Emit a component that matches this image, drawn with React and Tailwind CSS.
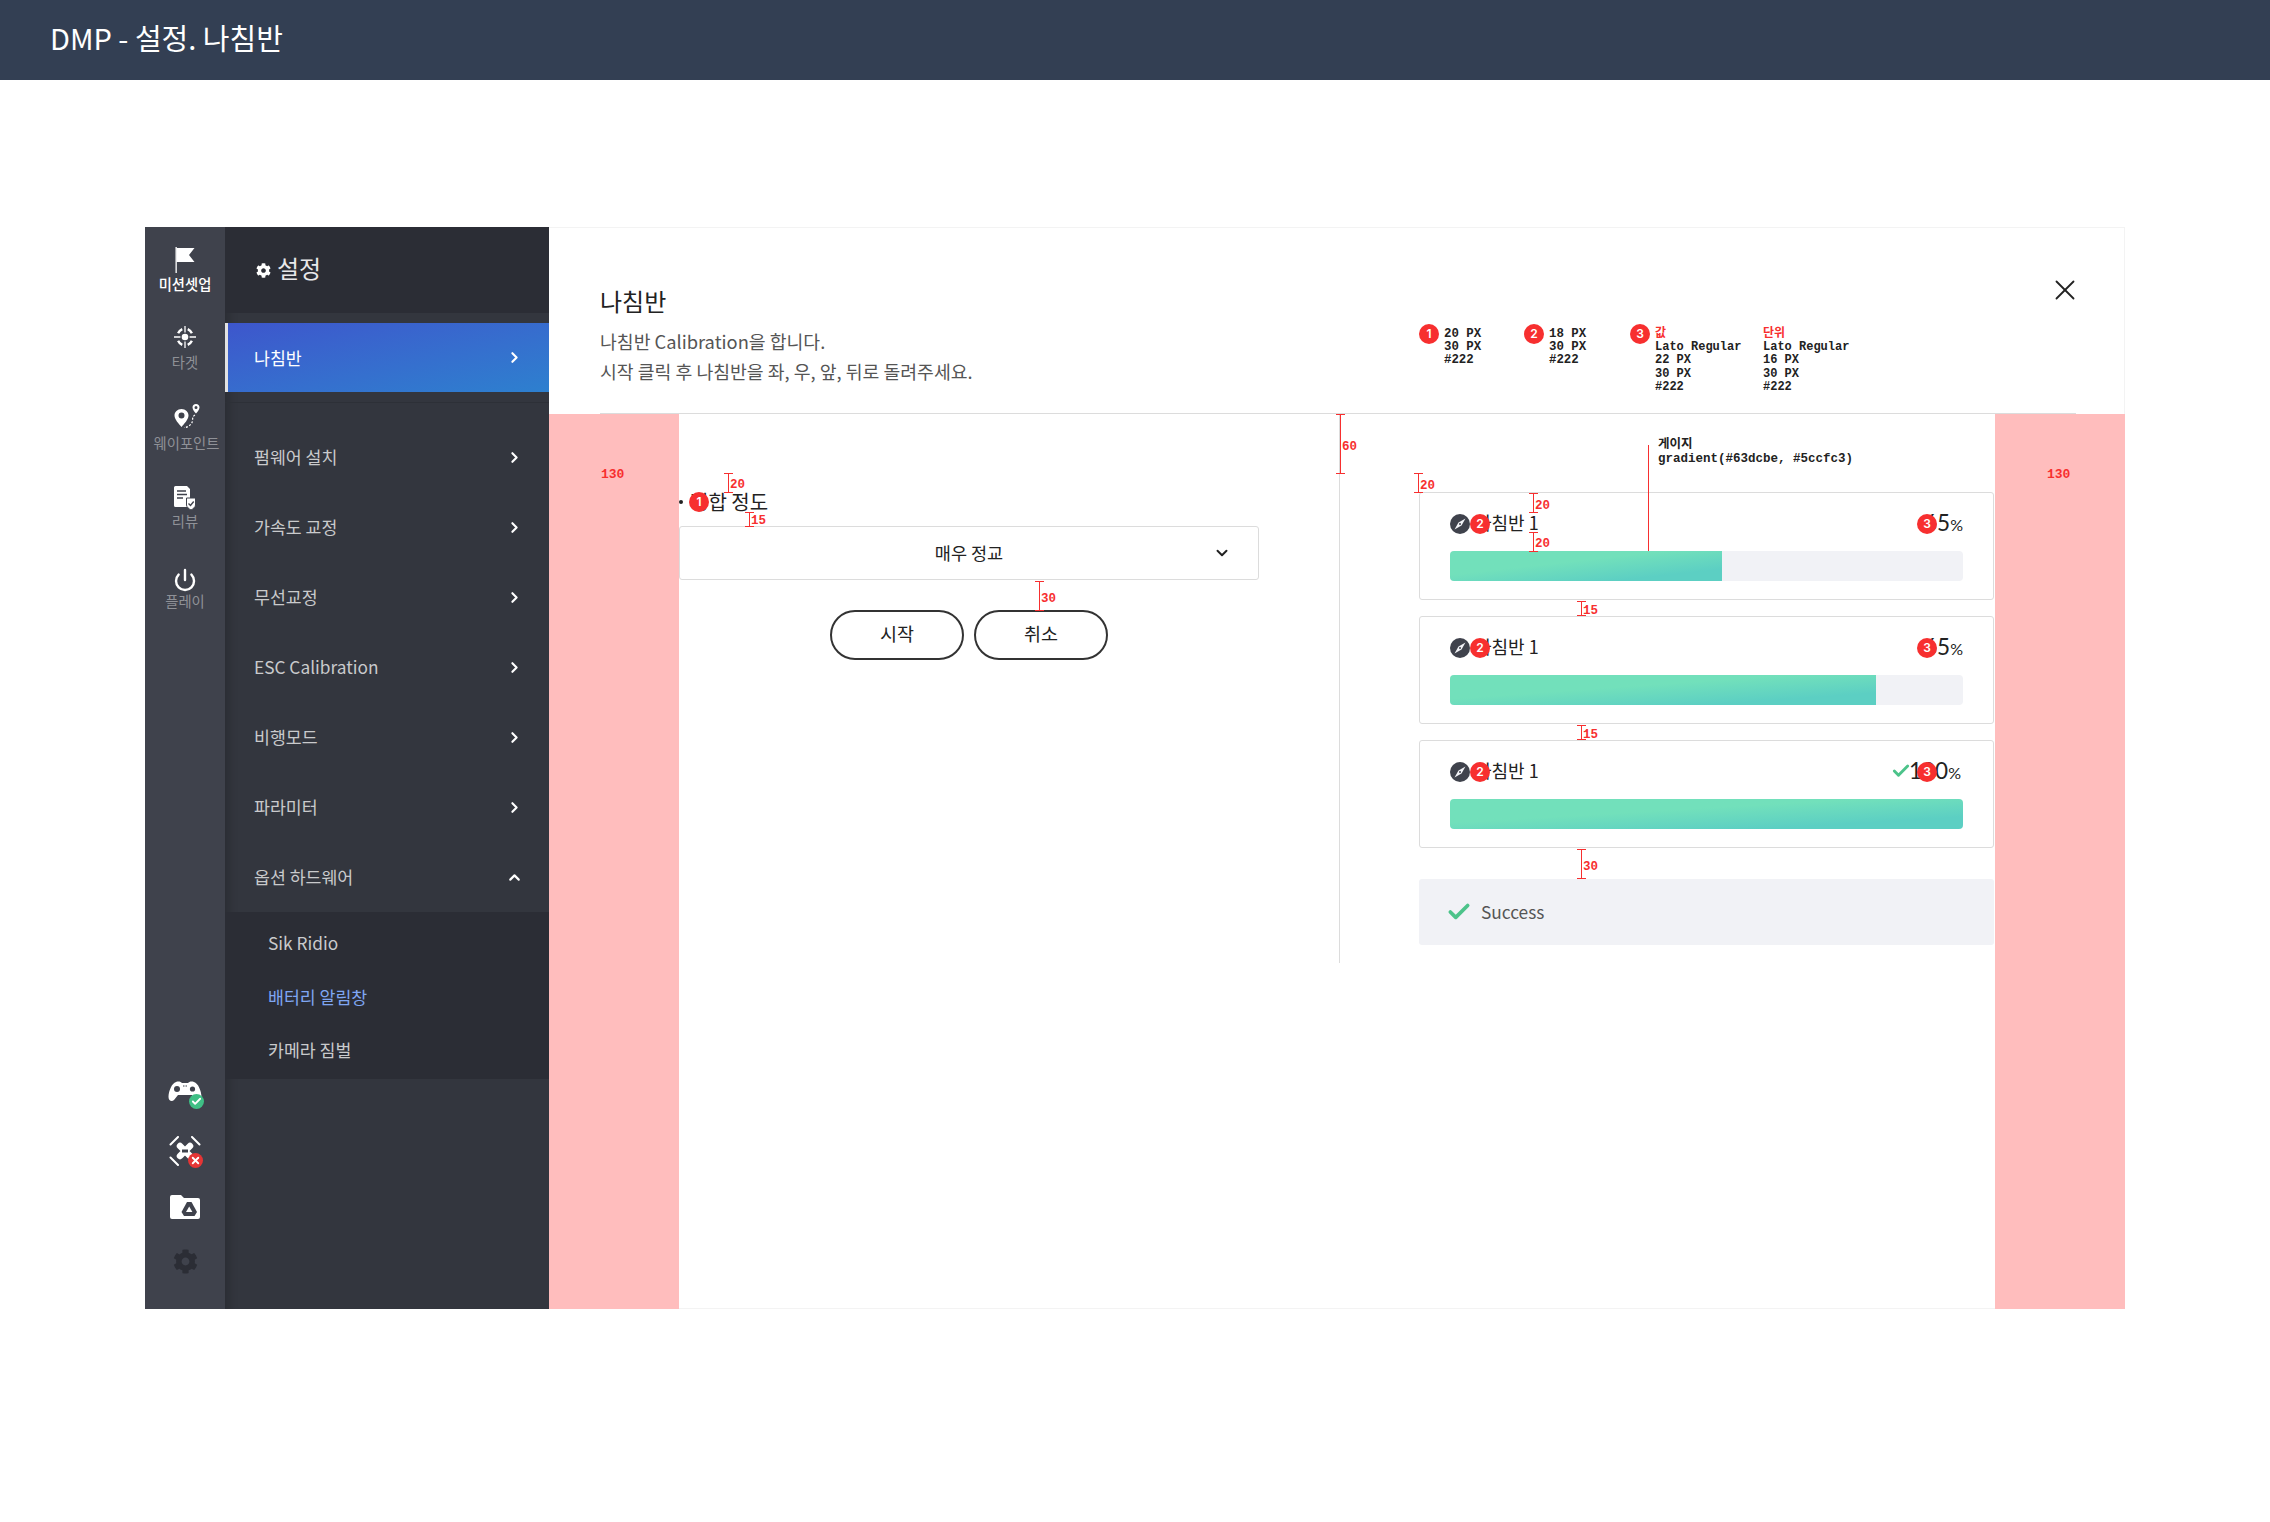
import React from 'react';
import { ChevronRight, ChevronUp, ChevronDown, Power, X, Check } from 'lucide-react';
import { FaCog } from 'react-icons/fa';

const menuItems = ['펌웨어 설치', '가속도 교정', '무선교정', 'ESC Calibration', '비행모드', '파라미터'];

// numbered marker from the spec sheet
const Badge = ({ n, className = '' }) => (
  <span className={`absolute flex h-5 w-5 items-center justify-center rounded-full bg-[#f72f2f] font-['Inter',sans-serif] text-[12px] font-semibold text-white ${className}`}>
    {n}
  </span>
);

// red measuring mark, placed by className
const Dim = ({ label, className = '', labelClass = '' }) => (
  <div className={`absolute w-[9px] border-x-0 border-y border-[#f72f2f] ${className}`}>
    <div className="absolute left-[4px] top-0 h-full w-px bg-[#f72f2f]" />
    <span className={`absolute left-[6px] font-['Liberation_Mono',monospace] text-[12.5px] font-bold leading-none text-[#f72f2f] ${labelClass}`}>{label}</span>
  </div>
);

const FlagIcon = () => (
  <svg width="20" height="26" viewBox="0 0 20 26" fill="white">
    <rect x="0.5" y="0" width="1.3" height="26" />
    <path d="M1.5 1 H19.5 L14 8 L19.5 15 H1.5 Z" />
  </svg>
);

const TargetIcon = () => (
  <svg width="22" height="22" viewBox="0 0 24 24" fill="none" stroke="white">
    <circle cx="12" cy="12" r="3.6" fill="white" stroke="none" />
    <path d="M12 0 V7 M12 17 V24 M0 12 H7 M17 12 H24" strokeWidth="1.4" />
    <path d="M4.5 8 A9 9 0 0 1 9 3.5 M15 3.5 A9 9 0 0 1 19.5 8 M19.5 16 A9 9 0 0 1 15 20.5 M9 20.5 A9 9 0 0 1 4.5 16" strokeWidth="2.6" />
  </svg>
);

const WaypointIcon = () => (
  <svg width="26" height="24" viewBox="0 0 26 24" fill="none">
    <path fillRule="evenodd" d="M7.5 5 C3.4 5 0.5 8 0.5 11.5 C0.5 15.5 5 20 7.5 23 C10 20 14.5 15.5 14.5 11.5 C14.5 8 11.6 5 7.5 5 Z M7.5 8.5 a3 3 0 1 1 0 6 a3 3 0 1 1 0 -6 Z" fill="white" />
    <path fillRule="evenodd" d="M22 0 C19.8 0 18.5 1.6 18.5 3.4 C18.5 5.5 20.6 7.6 22 9.5 C23.4 7.6 25.5 5.5 25.5 3.4 C25.5 1.6 24.2 0 22 0 Z M22 2 a1.5 1.5 0 1 1 0 3 a1.5 1.5 0 1 1 0 -3 Z" fill="white" />
    <path d="M21 11 C17 13 20 17 17 20 C15.5 22 13 23.5 10 23.5" stroke="white" strokeWidth="1.2" strokeDasharray="2 1.6" />
  </svg>
);

const ReviewIcon = () => (
  <svg width="22" height="24" viewBox="0 0 22 24">
    <path d="M1.5 0 H13 L16 3 V21 H1.5 A1.5 1.5 0 0 1 0 19.5 V1.5 A1.5 1.5 0 0 1 1.5 0 Z" fill="white" />
    <path d="M3 5 H12 M3 8.5 H13 M3 12 H9" stroke="#3f424c" strokeWidth="1.5" />
    <path d="M13 12 L21.5 12 V19 C21.5 21 19 23 17 24 C15 23 12.5 21 12.5 19 V12 Z" fill="white" stroke="#3f424c" strokeWidth="1" />
    <path d="M14.5 17.5 L16.5 19.5 L19.7 15.5" fill="none" stroke="#3f424c" strokeWidth="1.4" />
  </svg>
);

const GamepadIcon = () => (
  <svg width="34" height="22" viewBox="0 0 34 22">
    <path d="M8 1 C11 0 13 1 14 2 H20 C21 1 23 0 26 1 C30 2 33.5 10 33.5 16 C33.5 20 30 21 28 19 L24 14 H10 L6 19 C4 21 .5 20 .5 16 C.5 10 4 2 8 1 Z" fill="white" />
    <circle cx="9" cy="8" r="3" fill="#3f424c" />
    <circle cx="24.5" cy="8" r="2.6" fill="#3f424c" />
    <path d="M15 5 H19" stroke="#3f424c" strokeWidth="1.2" strokeDasharray="1.5 1" />
  </svg>
);

const DroneIcon = () => (
  <svg width="32" height="30" viewBox="0 0 32 30" fill="none">
    <path d="M1.5 8.5 L9 1 M23 1 L30.5 8.5 M1.5 21.5 L9 29 M23 29 L30.5 21.5" stroke="white" strokeWidth="2" strokeLinecap="round" />
    <path d="M11 10 L21 20 M21 10 L11 20" stroke="white" strokeWidth="6.5" strokeLinecap="round" />
    <rect x="13" y="13.5" width="6" height="3" fill="#3f424c" />
  </svg>
);

const FolderIcon = () => (
  <svg width="30" height="24" viewBox="0 0 30 24">
    <path d="M2 0 H11 L14 3 H28 A2 2 0 0 1 30 5 V22 A2 2 0 0 1 28 24 H2 A2 2 0 0 1 0 22 V2 A2 2 0 0 1 2 0 Z" fill="white" />
    <path d="M17 7 H21.5 L27 17 L24.5 21 H14 L11.5 17 Z" fill="#3f424c" />
    <path d="M19.2 11.5 L22.4 17 H16 Z" fill="white" />
  </svg>
);

const CompassIcon = () => (
  <svg width="20" height="20" viewBox="0 0 20 20" className="shrink-0">
    <circle cx="10" cy="10" r="10" fill="#3f424c" />
    <path d="M15.5 4.5 L11.5 11.5 L4.5 15.5 L8.5 8.5 Z" fill="#f1f2f6" />
    <circle cx="10" cy="10" r="1" fill="#3f424c" />
  </svg>
);

const StatusDot = ({ ok }) => (
  <span className={`absolute bottom-[3px] -right-[2px] flex h-[15px] w-[15px] items-center justify-center rounded-full ${ok ? 'bg-[#3fbf85]' : 'bg-[#e53535]'}`}>
    {ok ? <Check size={11} strokeWidth={4} color="white" /> : <X size={11} strokeWidth={4} color="white" />}
  </span>
);

const RailItem = ({ icon, label, active, className = '', labelClass = '' }) => (
  <div className={`flex flex-col items-center ${className}`}>
    <div className="flex h-[28px] items-center justify-center">{icon}</div>
    <span className={`h-5 whitespace-nowrap text-[14.3px] leading-5 ${active ? 'font-medium text-white' : 'text-[#8f9197]'} ${labelClass}`}>{label}</span>
  </div>
);

const MenuRow = ({ label }) => (
  <div className="flex h-[70px] items-center justify-between pl-[29px] pr-[26px] text-[17.3px] text-[#c9cacc]">
    <span className="pb-px">{label}</span>
    <ChevronRight size={17} strokeWidth={3} className="text-white" />
  </div>
);

const ProgressCard = ({ percent, value, done, className = '' }) => (
  <div className={`h-[108px] rounded-[3px] border border-[#dcdcdc] bg-white px-[30px] pt-[21px] ${className}`}>
    <div className="relative flex h-5 items-center justify-between">
      <div className="flex items-center text-[18px] text-[#222]">
        <CompassIcon />
        <span className="ml-[5px] pb-[4px]">나침반 1</span>
      </div>
      <div className={`flex items-baseline pb-[3px] font-['Lato',sans-serif] text-[#222] ${done ? 'pr-[2px]' : ''}`}>
        {done && <Check size={20} strokeWidth={3.5} className="-mr-[2px] self-center text-[#4cc38a]" />}
        <span className="text-[22.5px]">{value}</span>
        <span className="text-[16px]">%</span>
      </div>
      <Badge n="2" className="left-[20px] top-0" />
      <Badge n="3" className="left-[467px] top-0" />
    </div>
    <div className="mt-[17px] h-[30px] overflow-hidden rounded-[4px] bg-[#f1f2f6]">
      <div className="h-full bg-gradient-to-br from-[#72e0bb] from-40% to-[#5ccfc3] to-80%" style={{ width: `${percent}%` }} />
    </div>
  </div>
);

export default function App() {
  return (
    <div className="relative min-h-[1522px] w-full overflow-hidden bg-white font-['Noto_Sans_CJK_KR',sans-serif]">
      <header className="flex h-[80px] items-center bg-[#333f53] pb-[4px] pl-[50px] text-[29px] text-white">
        DMP - 설정. 나침반
      </header>

      <div className="ml-[145px] mt-[147px] flex h-[1082px] w-[1980px]">
        {/* icon rail */}
        <aside className="flex w-[80px] shrink-0 flex-col bg-[#3f424c] pt-[19px]">
          <RailItem active icon={<FlagIcon />} label="미션셋업" className="h-[77px]" />
          <RailItem icon={<TargetIcon />} label="타겟" className="h-[79px]" labelClass="mt-px" />
          <RailItem icon={<WaypointIcon />} label="웨이포인트" className="h-[82px] pl-[3px]" labelClass="mt-[3px]" />
          <RailItem icon={<ReviewIcon />} label="리뷰" className="h-[82px]" labelClass="-mt-px" />
          <RailItem icon={<Power size={24} strokeWidth={2.4} className="text-white" />} label="플레이" labelClass="-mt-[3px]" />
          <div className="mt-auto flex flex-col items-center pb-[28px]">
            <div className="relative flex h-10 items-center"><GamepadIcon /><StatusDot ok /></div>
            <div className="relative mt-[19px] flex h-10 items-center"><DroneIcon /><StatusDot /></div>
            <div className="mt-[16px] flex h-10 items-center"><FolderIcon /></div>
            <div className="mt-[14px] flex h-10 items-center"><FaCog size={25} className="text-[#2b2d35]" /></div>
          </div>
        </aside>

        {/* settings menu */}
        <nav className="w-[324px] shrink-0 bg-[#33363e] shadow-[inset_12px_0_10px_-8px_rgba(0,0,0,0.18)]">
          <div className="flex h-[86px] items-center gap-[6px] bg-[#2b2d35] pl-[31px] text-[24px] text-[#e8e8ea]">
            <FaCog size={15} className="text-white" />
            <span className="pb-[5px]">설정</span>
          </div>
          <div className="mt-[10px] flex h-[69px] items-center justify-between border-l-[3px] border-[#e2e2e2] bg-gradient-to-br from-[#3d56cc] to-[#2d80cf] pl-[26px] pr-[26px] text-[17.3px] text-white">
            <span>나침반</span>
            <ChevronRight size={17} strokeWidth={3} />
          </div>
          <div className="mb-[19px] mt-[10px] h-px bg-[#2d3037]" />
          {menuItems.map(item => <MenuRow key={item} label={item} />)}
          <div className="flex h-[70px] items-center justify-between pl-[29px] pr-[26px] text-[17.3px] text-[#c9cacc]">
            <span className="pb-px">옵션 하드웨어</span>
            <ChevronUp size={17} strokeWidth={3} className="text-white" />
          </div>
          <div className="bg-[#2b2d35] pb-px pl-[43px] pt-[4px] text-[17.3px] text-[#c9cacc]">
            <div className="flex h-[54px] items-center pb-px">Sik Ridio</div>
            <div className="flex h-[54px] items-center pb-px text-[#7fa6f2]">배터리 알림창</div>
            <div className="flex h-[54px] items-center pb-[2px]">카메라 짐벌</div>
          </div>
        </nav>

        {/* calibration panel */}
        <main className="flex min-w-0 flex-1 flex-col">
          <div className="border-r border-t border-[#f3f3f3]">
            <div className="ml-[51px] mr-[48px] flex h-[186px] items-start justify-between border-b border-[#dcdcdc]">
              <div className="pt-[55px]">
                <h1 className="text-[24px] leading-9 text-[#222]">나침반</h1>
                <p className="mt-[7px] text-[18.3px] leading-[30px] text-[#555]">나침반 Calibration을 합니다.</p>
                <p className="text-[18.3px] leading-[30px] text-[#555]">시작 클릭 후 나침반을 좌, 우, 앞, 뒤로 돌려주세요.</p>
              </div>
              <X size={34} strokeWidth={1.3} className="mr-[-6px] mt-[45px] text-[#222]" />
            </div>
          </div>

          <div className="flex flex-1">
            <div className="w-[130px] shrink-0 bg-[#ffbdbd]" />
            <div className="flex min-w-0 flex-1 items-start border-b border-[#f3f3f3]">
              <section className="h-[549px] w-[661px] shrink-0 border-r border-[#dcdcdc] pt-[78px]">
                <div className="w-[580px]">
                  <div className="flex h-5 items-center gap-[7px] text-[20px] text-[#222]">
                    <span className="h-1 w-1 rounded-full bg-[#222]" />
                    <span>정합 정도</span>
                  </div>
                  <div className="relative mt-[14px] flex h-[54px] items-center justify-center rounded-[3px] border border-[#dcdcdc] text-[17.5px] text-[#222]">
                    매우 정교
                    <ChevronDown size={18} strokeWidth={2.6} className="absolute right-[27px] top-[17px]" />
                  </div>
                  <div className="mt-[30px] flex justify-center gap-[10px]">
                    <button className="h-[50px] w-[134px] rounded-full border-2 border-[#333] pb-[2px] text-[18.5px] text-[#222]">시작</button>
                    <button className="h-[50px] w-[134px] rounded-full border-2 border-[#333] pb-[2px] text-[18.5px] text-[#222]">취소</button>
                  </div>
                </div>
              </section>

              <section className="ml-[79px] w-[575px] shrink-0 pt-[78px]">
                <ProgressCard percent={53} value="65" />
                <ProgressCard percent={83} value="65" className="mt-[16px]" />
                <ProgressCard percent={100} value="100" done className="mt-[16px]" />
                <div className="mt-[31px] flex h-[66px] items-center rounded-[3px] bg-[#f1f2f6] pl-[27px] text-[17.3px] text-[#555]">
                  <Check size={26} strokeWidth={3.4} className="text-[#4cc38a]" />
                  <span className="ml-[9px]">Success</span>
                </div>
              </section>
            </div>
            <div className="w-[130px] shrink-0 bg-[#ffbdbd]" />
          </div>
        </main>
      </div>

      {/* spec sheet annotations over the design */}
      <Badge n="1" className="left-[689px] top-[492px]" />
      <Dim label="20" className="left-[724px] top-[473px] h-[20px]" labelClass="top-[5px]" />
      <Dim label="15" className="left-[745px] top-[512px] h-[15px]" labelClass="top-[2px]" />
      <Dim label="30" className="left-[1035px] top-[581px] h-[30px]" labelClass="top-[11px]" />
      <Dim label="60" className="left-[1336px] top-[414px] h-[60px]" labelClass="top-[26px]" />
      <Dim label="20" className="left-[1414px] top-[473px] h-[20px]" labelClass="top-[6px]" />
      <Dim label="20" className="left-[1529px] top-[493px] h-[20px]" labelClass="top-[6px]" />
      <Dim label="20" className="left-[1529px] top-[532px] h-[20px]" labelClass="top-[5px]" />
      <Dim label="15" className="left-[1577px] top-[601px] h-[15px]" labelClass="top-[3px]" />
      <Dim label="15" className="left-[1577px] top-[725px] h-[15px]" labelClass="top-[3px]" />
      <Dim label="30" className="left-[1577px] top-[849px] h-[30px]" labelClass="top-[11px]" />

      <span className="absolute left-[601px] top-[468px] font-['Liberation_Mono',monospace] text-[13px] font-bold leading-none text-[#f72f2f]">130</span>
      <span className="absolute left-[2047px] top-[468px] font-['Liberation_Mono',monospace] text-[13px] font-bold leading-none text-[#f72f2f]">130</span>

      <div className="absolute left-[1648px] top-[445px] h-[106px] w-px bg-[#f72f2f]" />
      <div className="absolute left-[1658px] top-[438px] font-['Liberation_Mono','Noto_Sans_CJK_KR',monospace] text-[12.5px] font-bold leading-[14px] text-[#222]">
        <div>게이지</div>
        <div>gradient(#63dcbe, #5ccfc3)</div>
      </div>

      <Badge n="1" className="left-[1419px] top-[324px]" />
      <div className="absolute left-[1444px] top-[328px] font-['Liberation_Mono','Noto_Sans_CJK_KR',monospace] text-[12.4px] font-bold leading-[13px] text-[#222]">
        <div>20 PX</div><div>30 PX</div><div>#222</div>
      </div>
      <Badge n="2" className="left-[1524px] top-[324px]" />
      <div className="absolute left-[1549px] top-[328px] font-['Liberation_Mono','Noto_Sans_CJK_KR',monospace] text-[12.4px] font-bold leading-[13px] text-[#222]">
        <div>18 PX</div><div>30 PX</div><div>#222</div>
      </div>
      <Badge n="3" className="left-[1630px] top-[324px]" />
      <div className="absolute left-[1655px] top-[328px] font-['Liberation_Mono','Noto_Sans_CJK_KR',monospace] text-[12px] font-bold leading-[13.2px] text-[#222]">
        <div className="text-[#f72f2f]">값</div><div>Lato Regular</div><div>22 PX</div><div>30 PX</div><div>#222</div>
      </div>
      <div className="absolute left-[1763px] top-[328px] font-['Liberation_Mono','Noto_Sans_CJK_KR',monospace] text-[12px] font-bold leading-[13.2px] text-[#222]">
        <div className="text-[#f72f2f]">단위</div><div>Lato Regular</div><div>16 PX</div><div>30 PX</div><div>#222</div>
      </div>
    </div>
  );
}
